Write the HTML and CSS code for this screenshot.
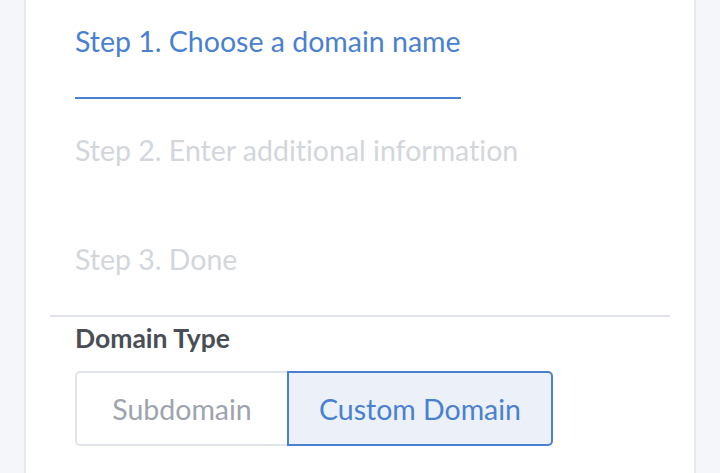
FILE: index.html
```html
<!DOCTYPE html>
<html lang="en">
<head>
<meta charset="utf-8">
<title>Domain setup</title>
<link rel="stylesheet" href="styles.css">
</head>
<body>
<main class="card">
  <ol class="steps">
    <li class="step active"><span class="step-label">Step 1. Choose a domain name</span></li>
    <li class="step"><span class="step-label">Step 2. Enter additional information</span></li>
    <li class="step"><span class="step-label">Step 3. Done</span></li>
  </ol>
  <hr class="divider">
  <section class="field">
    <h3 class="field-label">Domain Type</h3>
    <div class="toggle-group">
      <button class="toggle">Subdomain</button>
      <button class="toggle selected">Custom Domain</button>
    </div>
  </section>
</main>
</body>
</html>
```

FILE: styles.css
```css
* { box-sizing: border-box; }
html, body {
  margin: 0;
  padding: 0;
  height: 100%;
  overflow: hidden;
}
body {
  background: #f5f6fa;
  font-family: "Lato", "Open Sans", sans-serif;
  font-variant-ligatures: none;
  padding: 0 24px 0 24px;
}
.card {
  background: #ffffff;
  border-left: 2px solid #e6e8ee;
  border-right: 2px solid #e6e8ee;
  min-height: 100%;
  padding: 0 24px;
}
.steps {
  list-style: none;
  margin: 0;
  padding: 24px 0 0 25px;
  display: flex;
  flex-direction: column;
  gap: 34px;
}
.step {
  font-size: 28.5px;
  line-height: 34px;
  color: #d3d6db;
}
.step-label {
  display: inline-block;
  padding-bottom: 39px;
  border-bottom: 2px solid transparent;
}
.step:last-child .step-label {
  padding-bottom: 37px;
}
.step.active { color: #4a80d0; }
.step.active .step-label { border-bottom-color: #4a80d0; }
.divider {
  margin: 0;
  border: 0;
  height: 2px;
  background: #e1e4e8;
}
.field {
  padding: 6px 0 0 25px;
}
.field-label {
  margin: 0;
  font-size: 26.5px;
  line-height: 30px;
  font-weight: 700;
  color: #494e56;
}
.toggle-group {
  display: flex;
  margin-top: 18px;
}
.toggle {
  font-family: inherit;
  font-variant-ligatures: none;
  font-size: 28.5px;
  white-space: nowrap;
  height: 75px;
  padding: 0;
  background: #ffffff;
  color: #9ea3ae;
  border: 2px solid #e1e4e9;
  cursor: pointer;
}
.toggle:first-child {
  width: 212px;
  border-radius: 5px 0 0 5px;
  border-right: 0;
}
.toggle.selected {
  width: 266px;
  background: #ecf1f9;
  color: #4a80d0;
  border-color: #4a80d0;
  border-radius: 0 5px 5px 0;
}
```
